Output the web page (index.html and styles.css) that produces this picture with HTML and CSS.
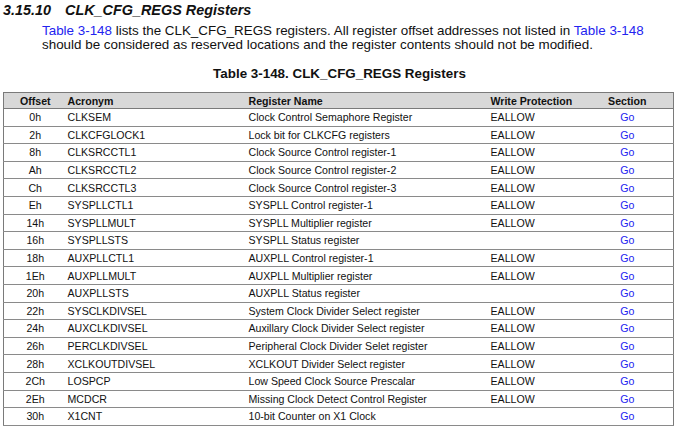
FILE: index.html
```html
<!DOCTYPE html>
<html>
<head>
<meta charset="utf-8">
<link rel="stylesheet" href="styles.css">
</head>
<body>
<h2 class="sec-title"><span class="sec-num">3.15.10</span>CLK_CFG_REGS Registers</h2>
<p class="intro"><a class="lnk">Table 3-148</a> lists the CLK_CFG_REGS registers. All register offset addresses not listed in <a class="lnk">Table 3-148</a> should be considered as reserved locations and the register contents should not be modified.</p>
<div class="caption">Table 3-148. CLK_CFG_REGS Registers</div>
<table class="regs">
<colgroup><col class="c1"><col class="c2"><col class="c3"><col class="c4"><col class="c5"></colgroup>
<thead><tr><th class="off">Offset</th><th>Acronym</th><th>Register Name</th><th>Write Protection</th><th class="sec">Section</th></tr></thead>
<tbody>
<tr><td class="off">0h</td><td class="acr">CLKSEM</td><td>Clock Control Semaphore Register</td><td>EALLOW</td><td class="sec"><a class="lnk">Go</a></td></tr>
<tr><td class="off">2h</td><td class="acr">CLKCFGLOCK1</td><td>Lock bit for CLKCFG registers</td><td>EALLOW</td><td class="sec"><a class="lnk">Go</a></td></tr>
<tr><td class="off">8h</td><td class="acr">CLKSRCCTL1</td><td>Clock Source Control register-1</td><td>EALLOW</td><td class="sec"><a class="lnk">Go</a></td></tr>
<tr><td class="off">Ah</td><td class="acr">CLKSRCCTL2</td><td>Clock Source Control register-2</td><td>EALLOW</td><td class="sec"><a class="lnk">Go</a></td></tr>
<tr><td class="off">Ch</td><td class="acr">CLKSRCCTL3</td><td>Clock Source Control register-3</td><td>EALLOW</td><td class="sec"><a class="lnk">Go</a></td></tr>
<tr><td class="off">Eh</td><td class="acr">SYSPLLCTL1</td><td>SYSPLL Control register-1</td><td>EALLOW</td><td class="sec"><a class="lnk">Go</a></td></tr>
<tr><td class="off">14h</td><td class="acr">SYSPLLMULT</td><td>SYSPLL Multiplier register</td><td>EALLOW</td><td class="sec"><a class="lnk">Go</a></td></tr>
<tr><td class="off">16h</td><td class="acr">SYSPLLSTS</td><td>SYSPLL Status register</td><td></td><td class="sec"><a class="lnk">Go</a></td></tr>
<tr><td class="off">18h</td><td class="acr">AUXPLLCTL1</td><td>AUXPLL Control register-1</td><td>EALLOW</td><td class="sec"><a class="lnk">Go</a></td></tr>
<tr><td class="off">1Eh</td><td class="acr">AUXPLLMULT</td><td>AUXPLL Multiplier register</td><td>EALLOW</td><td class="sec"><a class="lnk">Go</a></td></tr>
<tr><td class="off">20h</td><td class="acr">AUXPLLSTS</td><td>AUXPLL Status register</td><td></td><td class="sec"><a class="lnk">Go</a></td></tr>
<tr><td class="off">22h</td><td class="acr">SYSCLKDIVSEL</td><td>System Clock Divider Select register</td><td>EALLOW</td><td class="sec"><a class="lnk">Go</a></td></tr>
<tr><td class="off">24h</td><td class="acr">AUXCLKDIVSEL</td><td>Auxillary Clock Divider Select register</td><td>EALLOW</td><td class="sec"><a class="lnk">Go</a></td></tr>
<tr><td class="off">26h</td><td class="acr">PERCLKDIVSEL</td><td>Peripheral Clock Divider Selet register</td><td>EALLOW</td><td class="sec"><a class="lnk">Go</a></td></tr>
<tr><td class="off">28h</td><td class="acr">XCLKOUTDIVSEL</td><td>XCLKOUT Divider Select register</td><td>EALLOW</td><td class="sec"><a class="lnk">Go</a></td></tr>
<tr><td class="off">2Ch</td><td class="acr">LOSPCP</td><td>Low Speed Clock Source Prescalar</td><td>EALLOW</td><td class="sec"><a class="lnk">Go</a></td></tr>
<tr><td class="off">2Eh</td><td class="acr">MCDCR</td><td>Missing Clock Detect Control Register</td><td>EALLOW</td><td class="sec"><a class="lnk">Go</a></td></tr>
<tr><td class="off">30h</td><td class="acr">X1CNT</td><td>10-bit Counter on X1 Clock</td><td></td><td class="sec"><a class="lnk">Go</a></td></tr>
</tbody>
</table>
</body>
</html>
```
FILE: styles.css
```css
html, body {
  margin: 0;
  padding: 0;
  background: #fff;
}
body {
  font-family: "Liberation Sans", Arial, sans-serif;
  color: #111;
}
.sec-title {
  margin: 0;
  padding: 1px 0 0 3px;
  font-size: 14.4px;
  line-height: 18px;
  font-style: italic;
  font-weight: bold;
}
.sec-num {
  display: inline-block;
  width: 62px;
}
.intro {
  margin: 5px 0 0 42px;
  width: 612px;
  font-size: 13.4px;
  line-height: 14px;
}
.lnk {
  color: #2323f0;
  text-decoration: none;
}
.caption {
  margin-top: 14px;
  text-align: center;
  font-weight: bold;
  font-size: 13.4px;
  line-height: 16px;
  padding-left: 2px;
}
.regs {
  margin: 10px 0 0 3px;
  width: 670px;
  border-collapse: collapse;
  table-layout: fixed;
  border: 1px solid #7a7a7a;
  font-size: 10.6px;
}
.c1 { width: 63px; }
.c2 { width: 177px; }
.c3 { width: 242px; }
.c4 { width: 96px; }
.c5 { width: 92px; }
.regs th {
  background: #d8d8d8;
  font-weight: bold;
  text-align: left;
  height: 15px;
  padding: 0 0 0 5px;
  border-bottom: 1px solid #7a7a7a;
}
.regs td {
  height: 16.6px;
  padding: 0 0 0 5px;
  border-bottom: 1px solid #8a8a8a;
  white-space: nowrap;
}
.regs th.off, .regs td.off {
  text-align: center;
  padding: 0;
}
.regs th:nth-child(2), .regs td.acr {
  padding-left: 1px;
}
.regs th.sec, .regs td.sec {
  text-align: center;
  padding: 0;
}
```
